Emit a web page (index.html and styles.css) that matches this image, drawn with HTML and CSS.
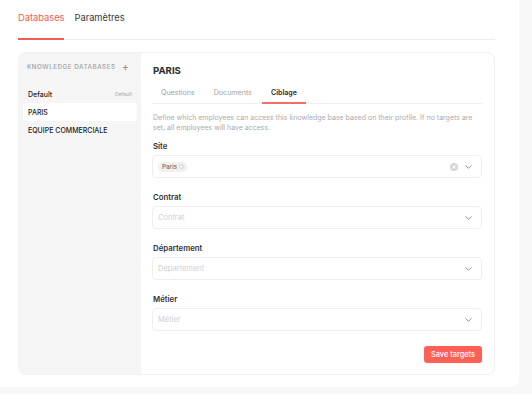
FILE: index.html
```html
<!DOCTYPE html>
<html>
<head>
<meta charset="utf-8">
<link rel="stylesheet" href="styles.css">
</head>
<body>
<div class="panel">
  <nav class="top-tabs">
    <span class="top-tab active">Databases</span>
    <span class="top-tab">Paramètres</span>
  </nav>
  <div class="card">
    <aside class="sidebar">
      <div class="side-head">
        <span>KNOWLEDGE DATABASES</span>
        <span class="plus">+</span>
      </div>
      <div class="side-item"><span>Default</span><span class="badge">Default</span></div>
      <div class="side-item selected"><span>PARIS</span></div>
      <div class="side-item"><span>EQUIPE COMMERCIALE</span></div>
    </aside>
    <section class="content">
      <h1 class="title">PARIS</h1>
      <div class="sub-tabs">
        <span class="sub-tab">Questions</span>
        <span class="sub-tab">Documents</span>
        <span class="sub-tab active">Ciblage</span>
      </div>
      <p class="desc">Define which employees can access this knowledge base based on their profile. If no targets are set, all employees will have access.</p>
      <div class="field">
        <label class="label">Site</label>
        <div class="select">
          <span class="chip">Paris <span class="chip-x">
            <svg width="5" height="5" viewBox="0 0 10 10"><circle cx="5" cy="5" r="4" fill="none" stroke="#c8c8c8" stroke-width="1.4"/></svg>
          </span></span>
          <span class="spacer"></span>
          <svg class="clear" width="8" height="8" viewBox="0 0 16 16"><circle cx="8" cy="8" r="8" fill="#d6d6d6"/><path d="M5.2 5.2l5.6 5.6M10.8 5.2l-5.6 5.6" stroke="#fff" stroke-width="1.8" stroke-linecap="round"/></svg>
          <svg class="chev" width="7" height="4" viewBox="0 0 10 6"><path d="M1 1l4 4 4-4" fill="none" stroke="#888" stroke-width="1.4" stroke-linecap="round" stroke-linejoin="round"/></svg>
        </div>
      </div>
      <div class="field">
        <label class="label">Contrat</label>
        <div class="select">
          <span class="placeholder">Contrat</span>
          <span class="spacer"></span>
          <svg class="chev" width="7" height="4" viewBox="0 0 10 6"><path d="M1 1l4 4 4-4" fill="none" stroke="#888" stroke-width="1.4" stroke-linecap="round" stroke-linejoin="round"/></svg>
        </div>
      </div>
      <div class="field">
        <label class="label">Département</label>
        <div class="select">
          <span class="placeholder">Département</span>
          <span class="spacer"></span>
          <svg class="chev" width="7" height="4" viewBox="0 0 10 6"><path d="M1 1l4 4 4-4" fill="none" stroke="#888" stroke-width="1.4" stroke-linecap="round" stroke-linejoin="round"/></svg>
        </div>
      </div>
      <div class="field">
        <label class="label">Métier</label>
        <div class="select">
          <span class="placeholder">Métier</span>
          <span class="spacer"></span>
          <svg class="chev" width="7" height="4" viewBox="0 0 10 6"><path d="M1 1l4 4 4-4" fill="none" stroke="#888" stroke-width="1.4" stroke-linecap="round" stroke-linejoin="round"/></svg>
        </div>
      </div>
      <div class="actions">
        <button class="save">Save targets</button>
      </div>
    </section>
  </div>
</div>
</body>
</html>
```
FILE: styles.css
```css
* { box-sizing: border-box; }
html, body { margin: 0; padding: 0; }
body {
  background: #f8f8f8;
  font-family: Inter, "Noto Sans", "DejaVu Sans", sans-serif;
  color: #333;
  width: 532px;
  height: 394px;
  overflow: hidden;
}
.panel {
  width: 519px;
  height: 387px;
  background: #fff;
  border-bottom-right-radius: 8px;
  padding: 0 24px 0 18px;
}
.top-tabs {
  display: flex;
  gap: 10px;
  height: 40px;
  border-bottom: 1px solid #ececec;
  align-items: stretch;
}
.top-tab {
  display: flex;
  align-items: center;
  font-size: 9.3px;
  color: #3a3a3a;
  padding-bottom: 4px;
  border-bottom: 2px solid transparent;
  margin-bottom: -1px;
}
.top-tab.active {
  color: #f05d52;
  border-bottom-color: #f05d52;
}
.card {
  margin-top: 12px;
  height: 323px;
  border: 1px solid #f1f1f1;
  border-radius: 8px;
  display: flex;
  overflow: hidden;
}
.sidebar {
  width: 122px;
  background: #f5f5f5;
  padding: 8px 4px 0 4px;
  display: flex;
  flex-direction: column;
}
.side-head {
  display: flex;
  justify-content: space-between;
  align-items: center;
  height: 12px;
  padding: 0 8px 0 4px;
  font-size: 6.3px;
  letter-spacing: 0.5px;
  color: #a3a3a3;
  font-weight: 500;
  white-space: nowrap;
  margin-bottom: 12px;
}
.plus {
  font-size: 11px;
  font-weight: 400;
  color: #8a8a8a;
  letter-spacing: 0;
}
.side-item {
  height: 18px;
  display: flex;
  justify-content: space-between;
  align-items: center;
  padding: 0 5px 0 5px;
  font-size: 7px;
  color: #222;
  font-weight: 500;
  border-radius: 4px;
}
.side-item.selected { background: #fff; }
.badge {
  font-size: 5px;
  color: #aaa;
  font-weight: 400;
}
.content {
  flex: 1;
  padding: 11px 12px 0 11px;
  display: flex;
  flex-direction: column;
}
.title {
  margin: 0 0 6px 1px;
  font-size: 9.6px;
  font-weight: 700;
  color: #2c2c2c;
  line-height: 14px;
}
.sub-tabs {
  display: flex;
  gap: 1px;
  border-bottom: 1px solid #f0f0f0;
  height: 20px;
}
.sub-tab {
  padding: 0 9px 0 9px;
  font-size: 7.1px;
  color: #a2a2a2;
  display: flex;
  align-items: center;
  padding-bottom: 1px;
  border-bottom: 2px solid transparent;
  margin-bottom: -1px;
}
.sub-tab.active {
  color: #2b2b2b;
  font-weight: 600;
  border-bottom-color: #f27069;
}
.desc {
  margin: 9px 0 8px 1px;
  font-size: 7px;
  line-height: 10px;
  color: #ababab;
}
.field {
  display: flex;
  flex-direction: column;
  margin-bottom: 14px;
}
.label {
  font-size: 7.8px;
  font-weight: 600;
  color: #333;
  line-height: 10px;
  margin: 0 0 4px 1px;
}
.select {
  height: 23px;
  border: 1px solid #eeeeee;
  border-radius: 4px;
  display: flex;
  align-items: center;
  padding: 0 9px 0 5px;
}
.spacer { flex: 1; }
.placeholder {
  font-size: 7.5px;
  color: #cfcfcf;
}
.chip {
  display: flex;
  align-items: center;
  gap: 2px;
  height: 10px;
  padding: 0 3px 0 4px;
  background: #f0f0f0;
  border-radius: 5px;
  font-size: 6.4px;
  color: #555;
}
.chip-x { display: flex; }
.clear { margin-right: 7px; }
.chev { margin-top: 1px; }
.actions {
  display: flex;
  justify-content: flex-end;
  margin-top: 1px;
}
.save {
  width: 58px;
  height: 17px;
  border: none;
  border-radius: 3px;
  background: #fe5f57;
  color: #fff;
  font-family: inherit;
  font-size: 7.4px;
  font-weight: 500;
  padding: 0;
}
```
